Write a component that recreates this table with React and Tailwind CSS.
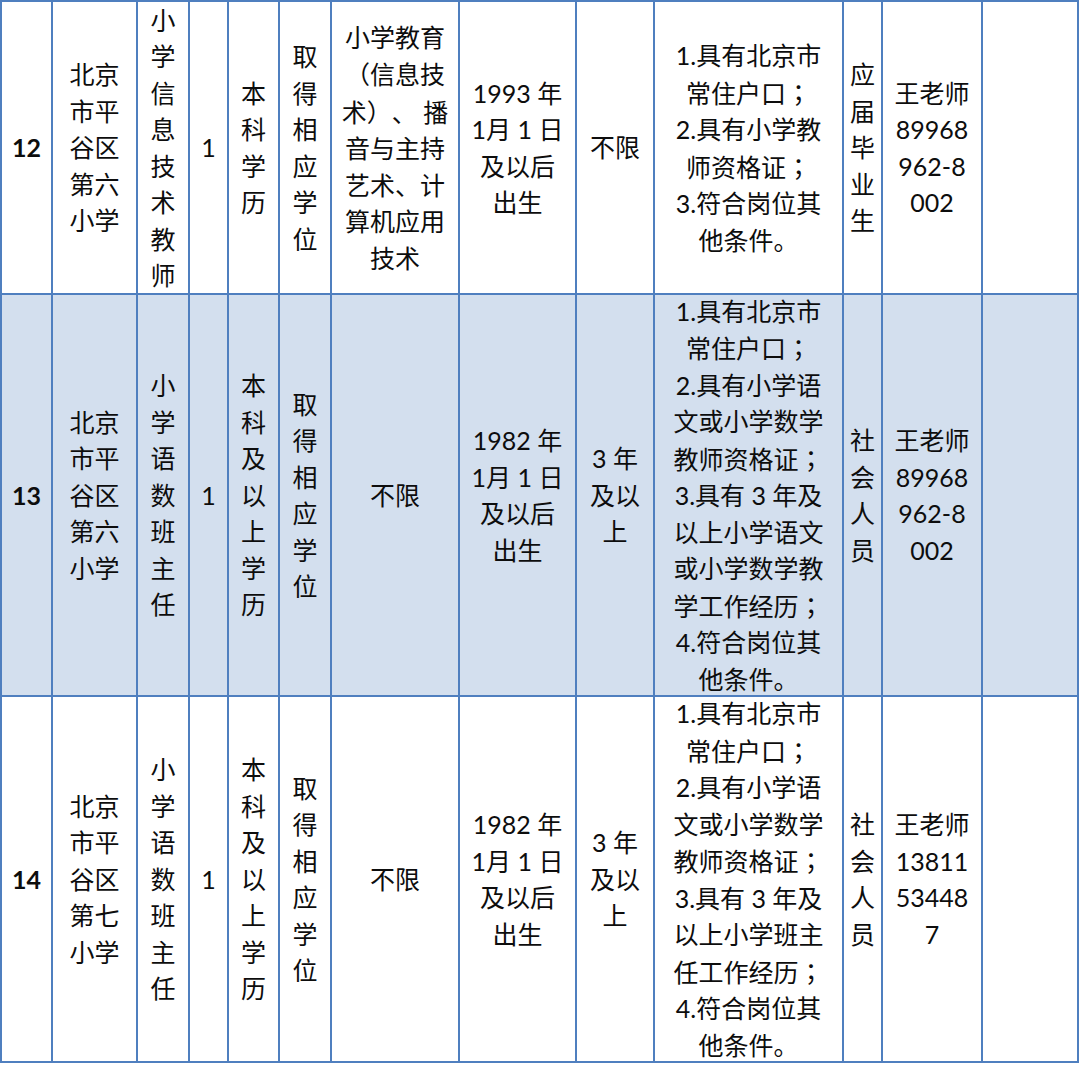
import React from 'react';

const cols = [51, 85, 52, 39, 51, 52, 128, 117, 78, 189, 39, 100, 96];

const rows = [
    {
        height: 293,
        bg: 'bg-white',
        cells: [
            ['12'],
            ['北京', '市平', '谷区', '第六', '小学'],
            ['小', '学', '信', '息', '技', '术', '教', '师'],
            ['1'],
            ['本', '科', '学', '历'],
            ['取', '得', '相', '应', '学', '位'],
            ['小学教育', '（信息技', '术）、 播', '音与主持', '艺术、计', '算机应用', '技术'],
            ['1993 年', '1月 1 日', '及以后', '出生'],
            ['不限'],
            ['1.具有北京市', '常住户口；', '2.具有小学教', '师资格证；', '3.符合岗位其', '他条件。'],
            ['应', '届', '毕', '业', '生'],
            ['王老师', '89968', '962-8', '002'],
            [],
        ],
    },
    {
        height: 402,
        bg: 'bg-[#d3dfee]',
        cells: [
            ['13'],
            ['北京', '市平', '谷区', '第六', '小学'],
            ['小', '学', '语', '数', '班', '主', '任'],
            ['1'],
            ['本', '科', '及', '以', '上', '学', '历'],
            ['取', '得', '相', '应', '学', '位'],
            ['不限'],
            ['1982 年', '1月 1 日', '及以后', '出生'],
            ['3 年', '及以', '上'],
            ['1.具有北京市', '常住户口；', '2.具有小学语', '文或小学数学', '教师资格证；', '3.具有 3 年及', '以上小学语文', '或小学数学教', '学工作经历；', '4.符合岗位其', '他条件。'],
            ['社', '会', '人', '员'],
            ['王老师', '89968', '962-8', '002'],
            [],
        ],
    },
    {
        height: 366,
        bg: 'bg-white',
        cells: [
            ['14'],
            ['北京', '市平', '谷区', '第七', '小学'],
            ['小', '学', '语', '数', '班', '主', '任'],
            ['1'],
            ['本', '科', '及', '以', '上', '学', '历'],
            ['取', '得', '相', '应', '学', '位'],
            ['不限'],
            ['1982 年', '1月 1 日', '及以后', '出生'],
            ['3 年', '及以', '上'],
            ['1.具有北京市', '常住户口；', '2.具有小学语', '文或小学数学', '教师资格证；', '3.具有 3 年及', '以上小学班主', '任工作经历；', '4.符合岗位其', '他条件。'],
            ['社', '会', '人', '员'],
            ['王老师', '13811', '53448', '7'],
            [],
        ],
    },
];

// full-width punctuation sits centred in a full em box, like the original table
function Line({ text }) {
    const parts = text.split(/([；（）])/);
    return parts.map((p, i) =>
        /^[；（）]$/.test(p)
            ? <span key={i} className="inline-block w-[1em] text-center font-['Noto_Sans_CJK_TC']">{p}</span>
            : <React.Fragment key={i}>{p}</React.Fragment>
    );
}

function Cell({ lines, width, height, bold }) {
    return (
        <div
            className="flex flex-col items-center justify-center border-r-2 border-b-2 border-[#4f7fbf] overflow-hidden"
            style={{ width, height }}
        >
            {lines.map((line, i) => (
                <div key={i} className={`whitespace-pre leading-[36.5px] ${bold ? 'font-bold' : ''}`}>
                    <Line text={line} />
                </div>
            ))}
        </div>
    );
}

export default function App() {
    return (
        <div className="w-[1080px] h-[1066px] bg-white text-[25px] text-[#0d0d0d] [text-spacing-trim:space-all] font-['Lato','Noto_Sans_CJK_SC',sans-serif]">
            <div className="inline-flex flex-col border-l-2 border-t-2 border-[#4f7fbf]">
                {rows.map((row, r) => (
                    <div key={r} className={`flex ${row.bg}`}>
                        {row.cells.map((lines, c) => (
                            <Cell key={c} lines={lines} width={cols[c]} height={row.height} bold={c === 0} />
                        ))}
                    </div>
                ))}
            </div>
        </div>
    );
}
